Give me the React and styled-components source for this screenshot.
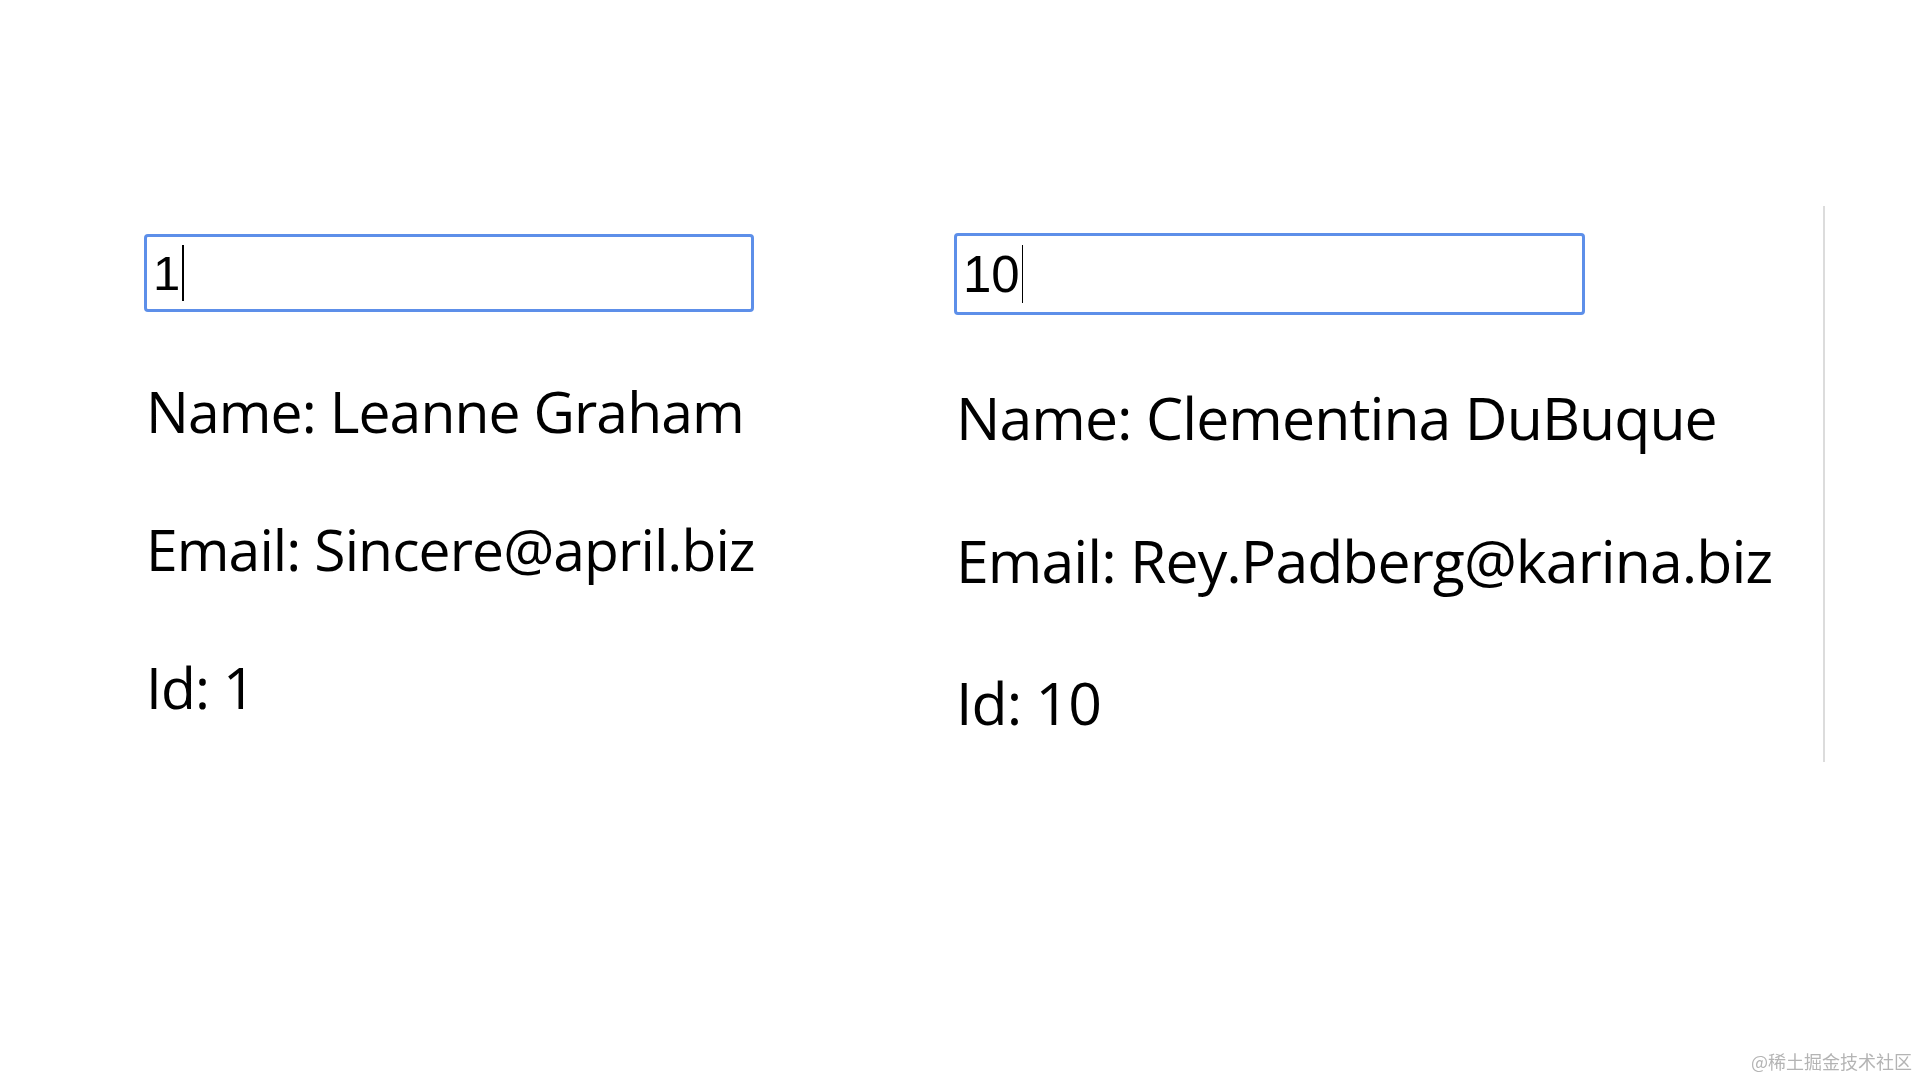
import React from "react";
import styled, { createGlobalStyle } from "styled-components";

const GlobalStyle = createGlobalStyle`
  html, body {
    margin: 0;
    padding: 0;
    background: #ffffff;
  }
  body {
    font-family: "Open Sans", "Noto Sans", sans-serif;
    color: #000;
  }
`;

const users = [
  { query: "1", name: "Leanne Graham", email: "Sincere@april.biz", id: 1, size: 58, top: 28 },
  { query: "10", name: "Clementina DuBuque", email: "Rey.Padberg@karina.biz", id: 10, size: 60, top: 27 },
];

function App() {
  return (
    <>
      <GlobalStyle />
      <Page>
        {users.map((u) => (
          <Panel key={u.id} $size={u.size} $top={u.top}>
            <SearchBox role="textbox" $size={u.size}>
              {u.query}
              <Caret />
            </SearchBox>
            <Line>Name: {u.name}</Line>
            <Line>Email: {u.email}</Line>
            <Line>Id: {u.id}</Line>
          </Panel>
        ))}
        <Divider />
      </Page>
      <Watermark>@稀土掘金技术社区</Watermark>
    </>
  );
}

export default App;

const Page = styled.main`
  display: flex;
  align-items: flex-start;
  padding: 206px 0 0 144px;
  min-height: 1080px;
  box-sizing: border-box;
`;

const Panel = styled.section`
  display: flex;
  flex-direction: column;
  align-items: flex-start;
  width: ${(p) => (p.$size > 58 ? 869 : 810)}px;
  padding-top: ${(p) => p.$top}px;
  font-size: ${(p) => p.$size}px;
  box-sizing: border-box;
`;

const SearchBox = styled.div`
  display: flex;
  align-items: center;
  box-sizing: border-box;
  width: ${(p) => Math.round(610 * (p.$size / 58))}px;
  height: ${(p) => Math.round(78 * (p.$size / 58)) + (p.$size > 58 ? 1 : 0)}px;
  padding-left: 6px;
  border: 3px solid #5d8fe9;
  border-radius: 4px;
  font-family: "Liberation Sans", Arial, sans-serif;
  font-size: ${(p) => Math.round(49 * (p.$size / 58))}px;
  color: #000;
`;

const Caret = styled.span`
  display: inline-block;
  width: 1.5px;
  height: 1.14em;
  margin-left: 2px;
  background: #000;
`;

const Line = styled.p`
  margin: 1.05em 0 0;
  padding-left: 2px;
  font-size: 0.983em;
  line-height: 1.37;
  letter-spacing: -0.016em;
  font-weight: 400;
  white-space: nowrap;
`;

const Divider = styled.div`
  width: 2px;
  height: 556px;
  background: #dcdcdc;
  flex-shrink: 0;
`;

const Watermark = styled.div`
  position: fixed;
  right: 8px;
  bottom: 6px;
  font-family: "Noto Sans CJK SC", sans-serif;
  font-size: 18px;
  color: #b4b4b4;
`;
